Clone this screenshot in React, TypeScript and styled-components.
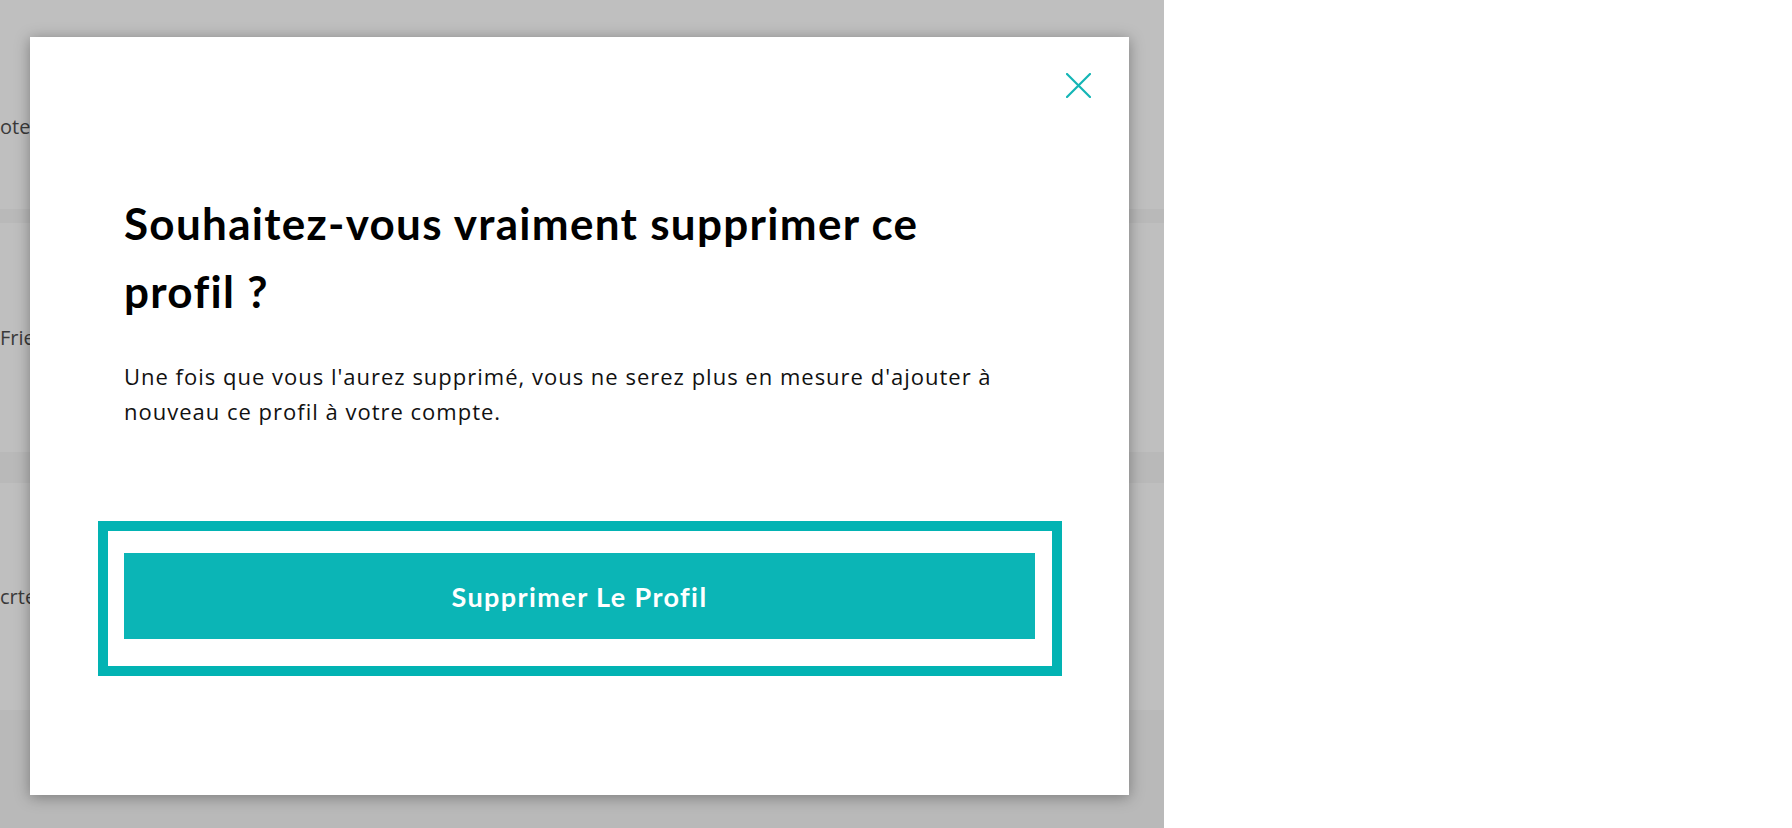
import React from "react";
import styled, { createGlobalStyle } from "styled-components";

const GlobalStyle = createGlobalStyle`
  html, body {
    margin: 0;
    padding: 0;
    background: #ffffff;
  }
  * { box-sizing: border-box; }
`;

const Screen = styled.div`
  width: 1792px;
  height: 828px;
  background: #ffffff;
  overflow: hidden;
  display: flex;
`;

const Backdrop = styled.div`
  position: relative;
  width: 1164px;
  height: 828px;
  background: #bfbfbf;
  display: flex;
  flex-direction: column;
`;

const BgRow = styled.div<{ $h: number; $pad?: number }>`
  height: ${(p) => p.$h}px;
  padding-top: ${(p) => p.$pad ?? 0}px;
  flex: none;
  display: flex;
  align-items: center;
  font-family: "Open Sans", "Liberation Sans", sans-serif;
  font-size: 20px;
  color: #3a3a3a;
`;

const BgBand = styled.div<{ $h: number }>`
  height: ${(p) => p.$h}px;
  flex: none;
  background: #b9b9b9;
`;

const Modal = styled.div`
  position: absolute;
  left: 30px;
  top: 37px;
  width: 1099px;
  height: 758px;
  background: #ffffff;
  box-shadow: 0 2px 14px rgba(0, 0, 0, 0.35);
  padding: 152px 94px 0 94px;
  display: flex;
  flex-direction: column;
`;

const CloseButton = styled.button`
  position: absolute;
  top: 36px;
  right: 38px;
  width: 25px;
  height: 25px;
  padding: 0;
  border: none;
  background: transparent;
  cursor: pointer;
  display: flex;
`;

const Title = styled.h2`
  margin: 0;
  max-width: 840px;
  font-family: Lato, "Noto Sans", sans-serif;
  font-weight: 700;
  font-size: 44px;
  letter-spacing: 1.3px;
  line-height: 68px;
  color: #000000;
`;

const Body = styled.p`
  margin: 34px 0 0 0;
  font-family: "Open Sans", "Noto Sans", sans-serif;
  font-weight: 400;
  font-size: 22px;
  letter-spacing: 1px;
  line-height: 35px;
  color: #111111;
`;

const FocusRing = styled.div`
  margin: 92px -27px 0 -26px;
  border: 10px solid #02b3b3;
  padding: 22px 17px 27px 16px;
  display: flex;
`;

const DeleteButton = styled.button`
  flex: 1;
  height: 86px;
  border: none;
  background: #0bb5b6;
  color: #ffffff;
  font-family: Lato, "Noto Sans", sans-serif;
  font-weight: 700;
  font-size: 27px;
  letter-spacing: 1.4px;
  cursor: pointer;
`;

const CloseIcon = () => (
  <svg width="25" height="25" viewBox="0 0 25 25" fill="none">
    <path d="M1 1 L24 24 M24 1 L1 24" stroke="#14b5b5" strokeWidth="2.2" strokeLinecap="round" />
  </svg>
);

export default function App() {
  return (
    <>
      <GlobalStyle />
      <Screen>
        <Backdrop>
          <BgRow $h={209} $pad={43}>ote</BgRow>
          <BgBand $h={14} />
          <BgRow $h={229}>Frie</BgRow>
          <BgBand $h={31} />
          <BgRow $h={227}>crte</BgRow>
          <BgBand $h={118} />
          <Modal role="dialog" aria-modal="true">
            <CloseButton aria-label="Fermer">
              <CloseIcon />
            </CloseButton>
            <Title>Souhaitez-vous vraiment supprimer ce profil ?</Title>
            <Body>
              Une fois que vous l'aurez supprimé, vous ne serez plus en mesure d'ajouter à nouveau ce profil à votre compte.
            </Body>
            <FocusRing>
              <DeleteButton>Supprimer Le Profil</DeleteButton>
            </FocusRing>
          </Modal>
        </Backdrop>
      </Screen>
    </>
  );
}
